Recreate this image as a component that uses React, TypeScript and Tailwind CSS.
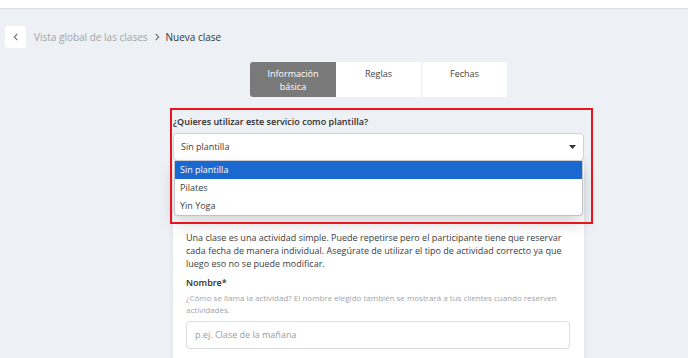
import React from "react";

export default function App() {
  return (
    <div
      className="w-[688px] h-[358px] overflow-hidden bg-[#edf0f4] relative"
      style={{ fontFamily: '"Open Sans", sans-serif' }}
    >
      <div className="h-[9px] bg-white border-b border-[#dcdfe4]" />
      <div className="flex items-center mt-[17px] ml-[5px] gap-[8px]">
        <button className="w-[21px] h-[22px] bg-white rounded-[3px] flex items-center justify-center">
          <svg width="8" height="10" viewBox="0 0 8 10">
            <path d="M5.3 1.8 L2.3 5 L5.3 8.2" fill="none" stroke="#6b6e73" strokeWidth="1.1" />
          </svg>
        </button>
        <div className="flex items-center text-[10px] leading-[14px] gap-[5px]">
          <span className="text-[#a2a5aa]">Vista global de las clases</span>
          <svg width="8" height="10" viewBox="0 0 8 10">
            <path d="M2.7 1.8 L5.7 5 L2.7 8.2" fill="none" stroke="#6b6e73" strokeWidth="1.1" />
          </svg>
          <span className="text-[#343537]">Nueva clase</span>
        </div>
      </div>

      <div className="flex mt-[14px] ml-[250px]">
        <div className="flex w-[257px] h-[35px] bg-white rounded-[3px] overflow-hidden text-[9px] leading-[13px]">
          <div className="w-[86px] bg-[#7a7a7a] text-white text-center pt-[5px]">
            Información<br />básica
          </div>
          <div className="w-[86px] border-r border-[#ececec] text-[#444] text-center pt-[5px]">Reglas</div>
          <div className="w-[85px] text-[#444] text-center pt-[5px]">Fechas</div>
        </div>
      </div>

      <div className="ml-[173px] w-[411px] mt-[18px]">
        <div className="text-[9px] font-semibold text-[#2e2e2e] leading-[14px]">
          ¿Quieres utilizar este servicio como plantilla?
        </div>
        <div className="relative mt-[4px] z-10">
          <div className="h-[28px] bg-white border border-[#cfd2d6] rounded-[4px] flex items-center justify-between pl-[7px] pr-[7px] text-[9px] text-[#3d3d3d]">
            <span>Sin plantilla</span>
            <svg width="7" height="4" viewBox="0 0 7 4">
              <path d="M0 0 L7 0 L3.5 4 Z" fill="#333" />
            </svg>
          </div>
          <div className="absolute left-[1px] right-[1px] top-[28px] bg-white rounded-b-[4px] border-x border-b border-[#bfc2c6] shadow-[0_8px_16px_rgba(0,0,0,0.16)] text-[9px] text-[#3d3d3d] overflow-hidden">
            <div className="h-[18px] bg-[#1a69d0] text-white pl-[5px] flex items-center">Sin plantilla</div>
            <div className="h-[18px] pl-[5px] flex items-center">Pilates</div>
            <div className="h-[18px] pl-[5px] flex items-center">Yin Yoga</div>
          </div>
        </div>

        <div className="bg-white shadow-[0_0_6px_rgba(0,0,0,0.07)] pl-[13px] pr-[14px] pt-[70px] pb-[20px]">
          <p className="text-[9px] leading-[13px] text-[#3d3d3d]">
            Una clase es una actividad simple. Puede repetirse pero el participante tiene que reservar cada fecha de manera individual. Asegúrate de utilizar el tipo de actividad correcto ya que luego eso no se puede modificar.
          </p>
          <div className="mt-[6px] text-[9px] font-semibold text-[#2e2e2e] leading-[14px]">Nombre*</div>
          <p className="mt-[2px] text-[8px] leading-[12px] text-[#a0a3a8]">
            ¿Cómo se llama la actividad? El nombre elegido también se mostrará a tus clientes cuando reserven actividades.
          </p>
          <div className="mt-[5px] h-[28px] border border-[#d9dce0] rounded-[4px] flex items-center pl-[8px] text-[9px] text-[#9a9da2]">
            p.ej. Clase de la mañana
          </div>
        </div>
      </div>

      <div className="absolute left-[170px] top-[108px] w-[423px] h-[116px] border-2 border-[#e8141e] pointer-events-none z-20" />
    </div>
  );
}
